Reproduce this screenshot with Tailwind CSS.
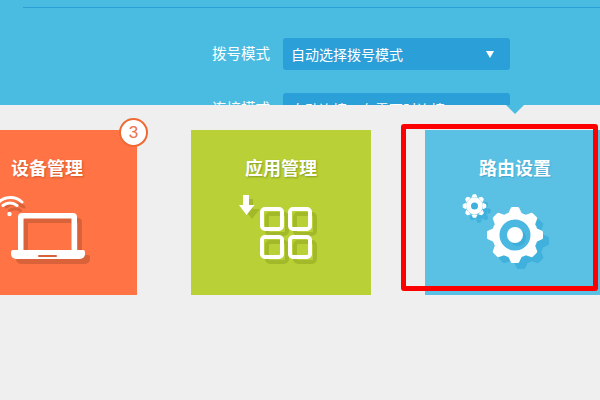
<!DOCTYPE html>
<html lang="zh-CN">
<head>
<meta charset="UTF-8">
<title>路由设置</title>
<script src="https://cdn.jsdelivr.net/npm/@tailwindcss/browser@4"></script>
</head>
<body class="w-[600px] h-[400px] overflow-hidden bg-[#efefef] relative font-['Liberation_Sans','Noto_Sans_CJK_SC',sans-serif]">

<!-- top panel -->
<div class="h-[105px] bg-[#4abce2] overflow-hidden pt-[7px] pl-[23px]">
  <div class="h-px bg-[#2ba0d6]"></div>
  <div class="mt-[30px] ml-[189px] flex items-center h-8">
    <span class="w-[60px] pt-0.5 text-[14.5px] text-white">拨号模式</span>
    <div class="ml-[11px] w-[227px] h-8 rounded-[3px] bg-[#2ba0d8] flex items-center justify-between pl-2 pr-[16px] pt-0.5 text-sm text-white">
      <span>自动选择拨号模式</span>
      <span class="w-0 h-0 mb-0.5 border-x-[4.5px] border-x-transparent border-t-[7px] border-t-white"></span>
    </div>
  </div>
  <div class="mt-[23px] ml-[189px] flex items-center h-8">
    <span class="w-[60px] pt-0.5 text-[14.5px] text-white">连接模式</span>
    <div class="ml-[11px] w-[227px] h-8 rounded-[3px] bg-[#2ba0d8] flex items-center pl-2 pt-0.5 text-sm text-white">
      <span>自动连接，在需要时连接</span>
    </div>
  </div>
</div>
<div class="absolute left-[506px] top-[105px] w-0 h-0 border-x-[9px] border-x-transparent border-t-[9px] border-t-[#4abce2]"></div>

<!-- cards -->
<div class="flex gap-[54px] mt-[25px] ml-[-43px] w-[700px]">
  <div class="relative w-[180px] h-[165px] shrink-0 bg-[#ff7345]">
    <div class="pt-[25px] pl-[54px] text-lg font-bold text-white [text-shadow:1px_1px_2px_rgba(160,60,20,.5)]">设备管理</div>
    <div class="absolute right-[-11px] top-[-12px] w-[29px] h-[29px] rounded-full bg-white border-2 border-[#ee6a35] flex items-center justify-center text-[17px] text-[#e8724c]">3</div>
    <!-- laptop, coords are page x+43, y-190 -->
    <svg class="absolute left-0 top-[60px]" width="180" height="100" viewBox="0 0 180 100">
      <g transform="translate(5 5)">
        <g fill="none" stroke="#d9623a" stroke-width="3" stroke-linecap="round">
          <path d="M44 12a15 15 0 0 1 18 0M47.500 15.500a10 10 0 0 1 11 0"/>
        </g>
        <path fill-rule="evenodd" fill="#d9623a" d="M65 23h51a4 4 0 0 1 4 4v33h-59V27a4 4 0 0 1 4-4zM66 28v32h50V28z"/>
        <path fill="#d9623a" d="M56 60h70a2 2 0 0 1 2 2v2a5 5 0 0 1-5 5H59a5 5 0 0 1-5-5v-2a2 2 0 0 1 2-2z"/>
      </g>
      <g fill="none" stroke="#fff" stroke-width="3" stroke-linecap="round">
        <path d="M42 12a17 17 0 0 1 23 0M46 15.500a11 11 0 0 1 14 0"/>
      </g>
      <circle cx="52.500" cy="24" r="2.200" fill="#fff"/>
      <path fill-rule="evenodd" fill="#fff" d="M65 23h51a4 4 0 0 1 4 4v33h-59V27a4 4 0 0 1 4-4zM66.500 28.500v31.500h48V28.500z"/>
      <path fill="#fff" d="M56 60h70a2 2 0 0 1 2 2v2a5 5 0 0 1-5 5H59a5 5 0 0 1-5-5v-2a2 2 0 0 1 2-2z"/>
      <rect x="81" y="65" width="19" height="2" rx="1" fill="#d9623a"/>
    </svg>
  </div>

  <div class="relative w-[180px] h-[165px] shrink-0 bg-[#b9d136]">
    <div class="pt-[25px] text-center text-lg font-bold text-white [text-shadow:1px_1px_2px_rgba(100,120,20,.6)]">应用管理</div>
    <!-- coords are page x-191, y-190 -->
    <svg class="absolute left-0 top-[60px]" width="180" height="100" viewBox="0 0 180 100">
      <g fill="none" stroke="#a2ba2a" stroke-width="4" transform="translate(5 5)">
        <rect x="71" y="19" width="20" height="20" rx="3"/><rect x="99" y="19" width="20" height="20" rx="3"/>
        <rect x="71" y="47" width="20" height="20" rx="3"/><rect x="99" y="47" width="20" height="20" rx="3"/>
      </g>
      <path fill="#a2ba2a" d="M52 5h6v10h7l-8 10l-8-10h3z" transform="translate(4 4)"/>
      <g fill="none" stroke="#fff" stroke-width="4">
        <rect x="71" y="19" width="20" height="20" rx="3"/><rect x="99" y="19" width="20" height="20" rx="3"/>
        <rect x="71" y="47" width="20" height="20" rx="3"/><rect x="99" y="47" width="20" height="20" rx="3"/>
      </g>
      <path fill="#fff" d="M52 5h6v10h5.500L55.500 25 48 15h4z"/>
    </svg>
  </div>

  <div class="relative w-[180px] h-[165px] shrink-0 bg-[#5ac1e4]">
    <div class="pt-[25px] text-center text-lg font-bold text-white [text-shadow:1px_1px_1px_rgba(40,130,180,.4)]">路由设置</div>
    <svg class="absolute left-0 top-0" width="180" height="165" viewBox="0 0 180 165">
      <defs>
        <path id="tooth" d="M-7.500-20L-4-27.500a2 2 0 0 1 1.500-.5h5a2 2 0 0 1 1.500 .5L7.500-20z"/>
        <g id="big">
          <circle r="23"/>
          <use href="#tooth"/><use href="#tooth" transform="rotate(45)"/><use href="#tooth" transform="rotate(90)"/><use href="#tooth" transform="rotate(135)"/>
          <use href="#tooth" transform="rotate(180)"/><use href="#tooth" transform="rotate(225)"/><use href="#tooth" transform="rotate(270)"/><use href="#tooth" transform="rotate(315)"/>
        </g>
        <g id="small">
          <circle r="8.500"/>
          <use href="#tooth" transform="scale(.42)"/><use href="#tooth" transform="rotate(45) scale(.42)"/><use href="#tooth" transform="rotate(90) scale(.42)"/><use href="#tooth" transform="rotate(135) scale(.42)"/>
          <use href="#tooth" transform="rotate(180) scale(.42)"/><use href="#tooth" transform="rotate(225) scale(.42)"/><use href="#tooth" transform="rotate(270) scale(.42)"/><use href="#tooth" transform="rotate(315) scale(.42)"/>
        </g>
      </defs>
      <use href="#big" fill="#3fb1dc" transform="translate(96 111)"/>
      <use href="#small" fill="#3fb1dc" transform="translate(54 81)"/>
      <use href="#big" fill="#fff" transform="translate(90 105)"/>
      <circle cx="90" cy="105" r="15.500" fill="#4ab8e0"/>
      <circle cx="93" cy="108" r="8" fill="#3fadd9"/>
      <circle cx="90" cy="105" r="8" fill="#fff"/>
      <use href="#small" fill="#fff" transform="translate(49.500 76)"/>
      <circle cx="49.500" cy="76" r="3.500" fill="#3fb1dc"/>
    </svg>
  </div>
</div>

<!-- red highlight -->
<div class="absolute left-[401px] top-[124px] w-[197px] h-[167px] border-[5px] border-[#ff0000] rounded-[3px]"></div>
</body>
</html>
